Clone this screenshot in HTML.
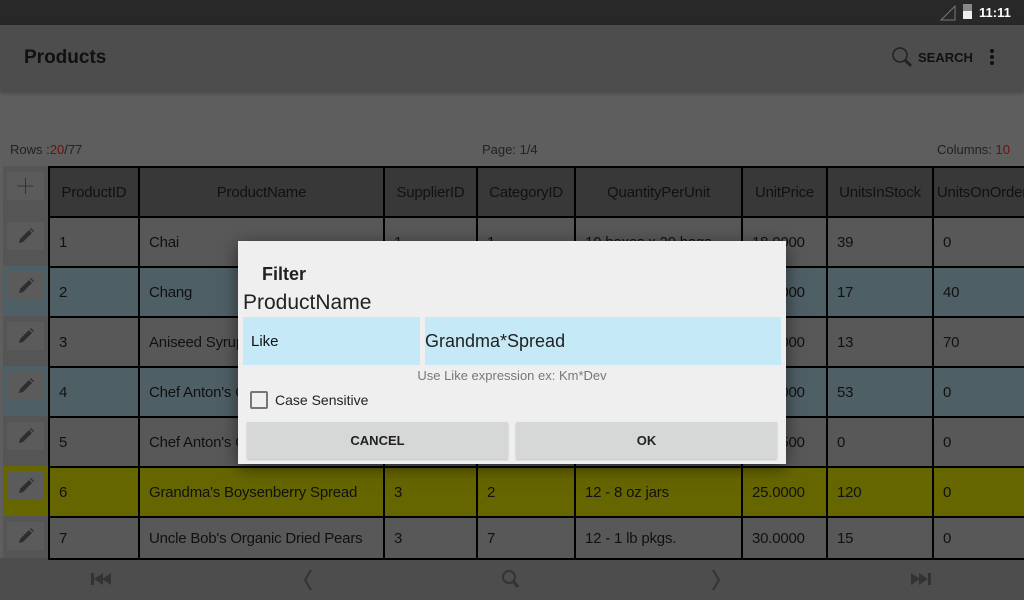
<!DOCTYPE html>
<html><head><meta charset="utf-8"><style>
*{margin:0;padding:0;box-sizing:border-box}
body{width:1024px;height:600px;overflow:hidden;background:#5e5e5e;font-family:"Liberation Sans",sans-serif;position:relative;color:#111}
.a{position:absolute}
.st{left:0;top:0;width:1024px;height:25px;background:#282828}
.ab{left:0;top:25px;width:1024px;height:66px;background:#4d4d4d;box-shadow:0 2px 4px rgba(0,0,0,.25)}
.cell{position:absolute;border:2px solid #000;font-size:15px;letter-spacing:-0.2px;display:flex;align-items:center;padding-left:9px;color:#111;white-space:nowrap;overflow:hidden}
.h{background:#383838;justify-content:center;padding-left:0;color:#111}
.ed{position:absolute;left:7px;width:37px;height:28px;background:#5b5b5b;border-radius:2px}
</style></head><body>
<div class="a st"></div>
<svg class="a" style="left:940px;top:5px" width="16" height="16"><path d="M1 15 L15 1 L15 15 Z" fill="none" stroke="#777" stroke-width="1"/></svg>
<div class="a" style="left:963px;top:4px;width:9px;height:15px;background:#eee"></div>
<div class="a" style="left:963px;top:4px;width:9px;height:7px;background:#888"></div>
<div class="a" style="left:979px;top:5px;color:#fff;font-weight:bold;font-size:13px">11:11</div>
<div class="a ab"></div>
<div class="a" style="left:24px;top:47px;font-size:19px;font-weight:bold;color:#111">Products</div>
<svg class="a" style="left:891px;top:46px" width="24" height="24"><circle cx="9" cy="9" r="7" fill="none" stroke="#222" stroke-width="1.5"/><path d="M14 14 L20 20" stroke="#222" stroke-width="3"/></svg>
<div class="a" style="left:918px;top:50px;font-size:13px;font-weight:bold;color:#111">SEARCH</div>
<div class="a" style="left:990px;top:49px;width:4px;height:4px;background:#111;border-radius:2px;box-shadow:0 6px 0 #111,0 12px 0 #111"></div>
<div class="a" style="left:10px;top:142px;font-size:13px;color:#222">Rows :<span style="color:#6b1010">20</span>/77</div>
<div class="a" style="left:482px;top:142px;font-size:13px;color:#222">Page: 1/4</div>
<div class="a" style="left:937px;top:142px;font-size:13px;color:#222">Columns: <span style="color:#6b1010">10</span></div>
<div class="a" style="left:3px;top:166px;width:45px;height:392px;background:#555"></div>
<div class="a" style="left:7px;top:172px;width:37px;height:28px;background:#5b5b5b"><svg width="37" height="28"><path d="M18.5 6 V22 M10.5 14 H26.5" stroke="#333" stroke-width="1"/></svg></div>
<div class="a" style="left:0;top:558px;width:1024px;height:42px;background:#4d4d4d"></div>
<div id="t"></div>
<svg class="a" style="left:90px;top:572px" width="24" height="14"><rect x="1" y="1" width="3" height="12" fill="#333"/><path d="M4 7 L13 1 V13 Z M12 7 L21 1 V13 Z" fill="#333"/></svg>
<svg class="a" style="left:300px;top:568px" width="16" height="24"><path d="M11 2 L5 12 L11 22" fill="none" stroke="#333" stroke-width="2"/></svg>
<svg class="a" style="left:500px;top:568px" width="24" height="24"><circle cx="9" cy="9" r="6" fill="none" stroke="#333" stroke-width="2"/><path d="M13 13 L18 19" stroke="#333" stroke-width="3"/></svg>
<svg class="a" style="left:708px;top:568px" width="16" height="24"><path d="M5 2 L11 12 L5 22" fill="none" stroke="#333" stroke-width="2"/></svg>
<svg class="a" style="left:910px;top:572px" width="24" height="14"><path d="M1 1 L10 7 L1 13 Z M9 1 L18 7 L9 13 Z" fill="#333"/><rect x="18" y="1" width="3" height="12" fill="#333"/></svg>
<div class="a" style="left:238px;top:241px;width:548px;height:223px;background:#efefef;box-shadow:0 4px 16px rgba(0,0,0,.5)">
<div class="a" style="left:24px;top:23px;font-size:18px;font-weight:bold;color:#222">Filter</div>
<div class="a" style="left:5px;top:50px;font-size:21px;color:#222">ProductName</div>
<div class="a" style="left:5px;top:76px;width:177px;height:48px;background:#c5e9f7;font-size:15px;padding:16px 8px;color:#111">Like</div>
<div class="a" style="left:187px;top:76px;width:356px;height:48px;background:#c5e9f7;font-size:18px;padding:14px 0;color:#222">Grandma*Spread</div>
<div class="a" style="left:0;top:127px;width:548px;text-align:center;font-size:13px;color:#777">Use Like expression ex: Km*Dev</div>
<div class="a" style="left:12px;top:150px;width:18px;height:18px;border:2px solid #777;border-radius:2px"></div>
<div class="a" style="left:37px;top:151px;font-size:14px;color:#222">Case Sensitive</div>
<div class="a" style="left:9px;top:181px;width:261px;height:37px;background:#d6d7d7;text-align:center;line-height:37px;font-size:13px;font-weight:bold;color:#222;box-shadow:0 1px 2px rgba(0,0,0,.2)">CANCEL</div>
<div class="a" style="left:278px;top:181px;width:261px;height:37px;background:#d6d7d7;text-align:center;line-height:37px;font-size:13px;font-weight:bold;color:#222;box-shadow:0 1px 2px rgba(0,0,0,.2)">OK</div>
</div>
<script>
var xs=[48,138,383,476,574,741,826,932,1030];
var hd=["ProductID","ProductName","SupplierID","CategoryID","QuantityPerUnit","UnitPrice","UnitsInStock","UnitsOnOrder"];
var rows=[["1","Chai","1","1","10 boxes x 20 bags","18.0000","39","0"],["2","Chang","1","1","24 - 12 oz bottles","19.0000","17","40"],["3","Aniseed Syrup","1","2","12 - 550 ml bottles","10.0000","13","70"],["4","Chef Anton's Cajun Seasoning","2","2","48 - 6 oz jars","22.0000","53","0"],["5","Chef Anton's Gumbo Mix","2","2","36 boxes","21.3500","0","0"],["6","Grandma's Boysenberry Spread","3","2","12 - 8 oz jars","25.0000","120","0"],["7","Uncle Bob's Organic Dried Pears","3","7","12 - 1 lb pkgs.","30.0000","15","0"]];
var cols=["#585858","#4f5f66","#585858","#4f5f66","#585858","#666600","#585858"];
var pen='<svg width="37" height="28"><path d="M12 21 L13 17 L22 8 L25 11 L16 20 Z M23 7 L24 6 L27 9 L26 10 Z" fill="#2e2e2e"/></svg>';
var h="";
for(var c=0;c<8;c++)h+='<div class="cell h" style="left:'+xs[c]+'px;top:166px;width:'+(xs[c+1]-xs[c]+2)+'px;height:52px">'+hd[c]+'</div>';
for(var r=0;r<7;r++){var y=216+r*50;
if(r==5)h+='<div class="a" style="left:3px;top:'+y+'px;width:45px;height:50px;background:#666600"></div>';
if(r%2==1&&r!=5)h+='<div class="a" style="left:3px;top:'+y+'px;width:45px;height:50px;background:#4f5f66"></div>';
h+='<div class="ed" style="top:'+(y+6)+'px">'+pen+'</div>';
for(var c=0;c<8;c++)h+='<div class="cell" style="left:'+xs[c]+'px;top:'+y+'px;width:'+(xs[c+1]-xs[c]+2)+'px;height:'+(r==6?44:52)+'px;background:'+cols[r]+'">'+rows[r][c]+'</div>';}
document.getElementById("t").innerHTML=h;
</script>
</body></html>
